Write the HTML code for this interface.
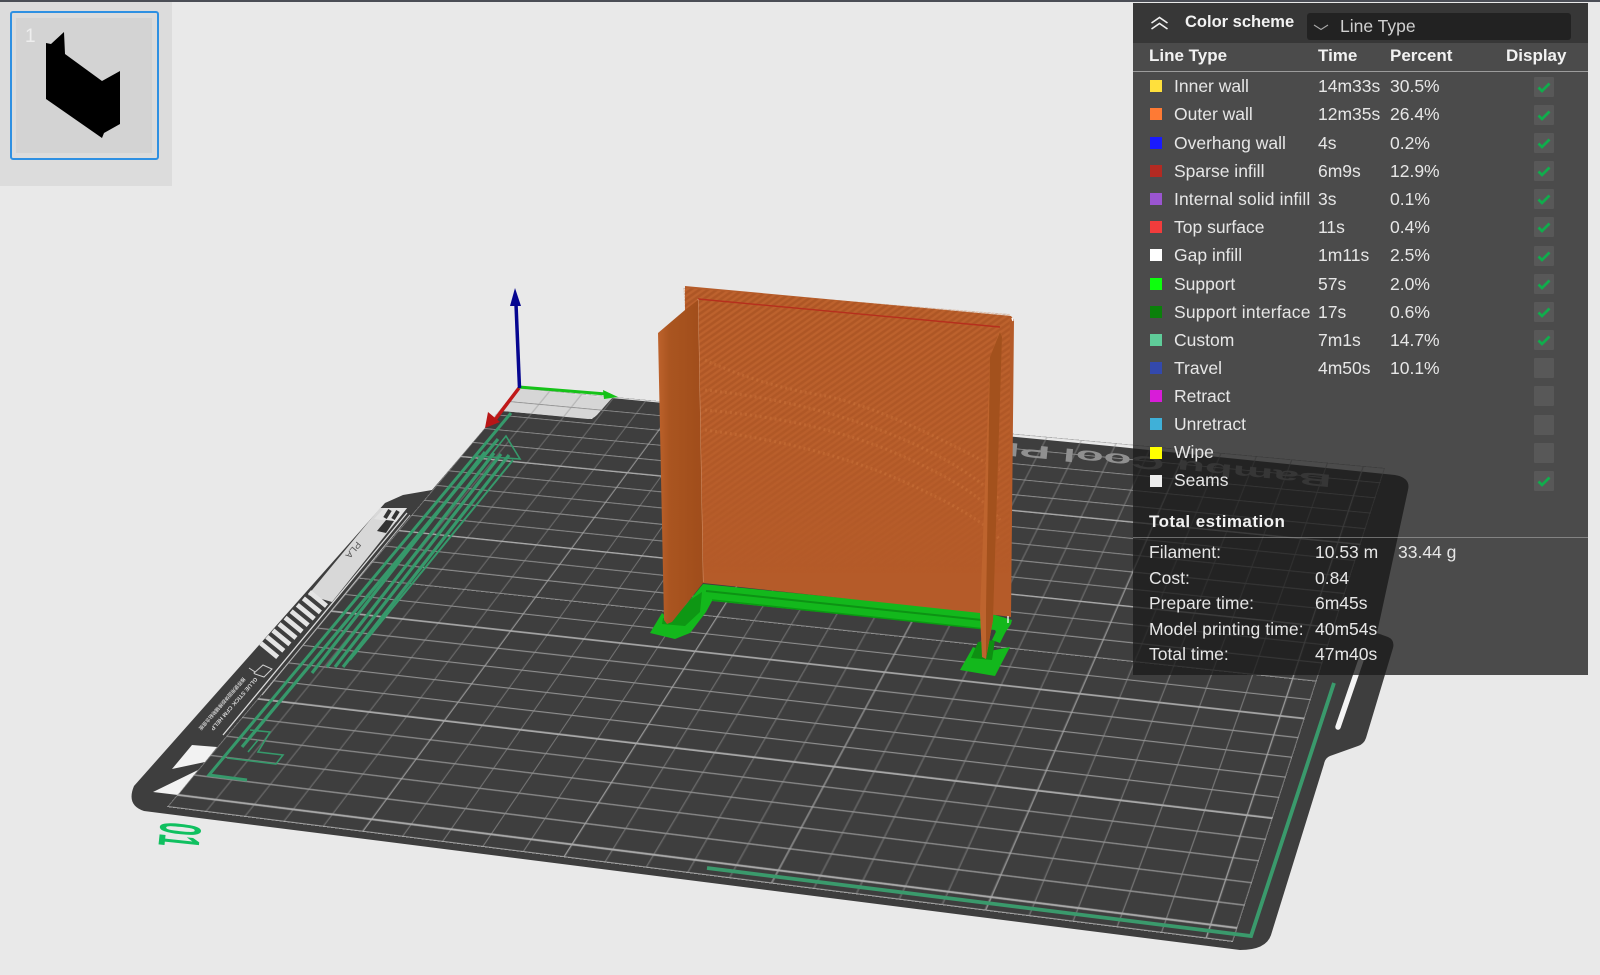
<!DOCTYPE html>
<html><head><meta charset="utf-8"><title>Line Type preview</title>
<style>
html,body{margin:0;padding:0;background:#e9e9e9;width:1600px;height:975px;overflow:hidden}
body{position:relative;font-family:"Liberation Sans","Noto Sans CJK SC",sans-serif;color:#e6e6e6}
.abs{position:absolute}
#grid{position:absolute;left:0;top:0;width:1000px;height:1000px;transform-origin:0 0;transform:matrix3d(.78333,.05173,0,-.00006041,-.38361,.2614,0,-.00019529,0,0,1,0,518,388,0,1)}
#panel{position:absolute;left:1133px;top:3px;width:455px;height:672px;background:rgba(27,27,27,.77)}
#head{position:absolute;left:1133px;top:3px;width:455px;height:40px;background:rgba(0,0,0,.27)}
.t{position:absolute;white-space:nowrap;line-height:24px;font-size:17.5px;height:24px}
.b{font-weight:bold;font-size:17px;color:#f2f2f2}
.sw{position:absolute;left:1150px;width:12px;height:12px}
.cb{position:absolute;left:1534px;width:20px;height:20px;background:#585858;border-radius:1px}
.cb svg{position:absolute;left:0;top:0}
.ln{position:absolute;left:1133px;width:455px;height:1px}
</style></head><body>

<svg class="abs" style="left:0;top:0" width="1600" height="975" viewBox="0 0 1600 975">
  <path d="M134 786 L385 503 L403 495 L432 490 L485 428 L502 411 L592 419 L612 398 L1120 447 L1395 475 Q1411 478 1408 490 L1377 633 L1388 637 Q1395 640 1393 648 L1366 738 Q1364 744 1358 746 L1330 756 Q1325 758 1324 764 L1271 935 Q1266 950 1240 950 L144 811 Q126 805 134 786 Z" fill="#3e3e3e"/>
  <path d="M519 389 L612 398 L597 415 Q593 419 588 419 L502 411 Z" fill="#d6d6d6"/>
  <!-- white tabs -->
  <polygon points="192,745 217,747 205,762 172,769" fill="#f2f2f2"/>
  <polygon points="198,770 178,795 153,792" fill="#f2f2f2"/>
  <!-- label strip -->
  <polygon points="407,508 332,602 308,595 380,508" fill="#d8d8d8"/>
  <polygon points="407,508 396,522 374,519 384,508" fill="#e2e2e2"/>
  <path d="M390 510l-5 8M398 511l-5 8" stroke="#333" stroke-width="4"/>
  <polygon points="386,520 394,521 386,533 377,531" fill="#333"/>
  <path d="M309.500 592L326.500 606M303.400 598.400L320.400 612.400M297.300 604.800L314.300 618.800M291.200 611.200L308.200 625.200M285.100 617.600L302.100 631.600M279 624L296 638M272.900 630.400L289.900 644.400M266.800 636.800L283.800 650.800M260.700 643.200L277.700 657.200" stroke="#e4e4e4" stroke-width="4.8"/>
  <line x1="407" y1="513" x2="223" y2="735" stroke="#dcdcdc" stroke-width="1.3"/>
  <line x1="410" y1="515" x2="262" y2="695" stroke="#bdbdbd" stroke-width="1"/>
  <path d="M254 673l9-8 9 4-8 8-9-3zm1-1l-6-4" fill="none" stroke="#d0d0d0" stroke-width="1"/>
  <text transform="translate(357,541) rotate(-50) scale(.9,.8) rotate(180)" font-size="11" fill="#555" font-family="Liberation Sans,sans-serif">PLA</text>
  <text transform="translate(255,677) rotate(131) scale(1,.7)" font-size="8" font-weight="bold" fill="#d4d4d4" textLength="68" lengthAdjust="spacingAndGlyphs" font-family="Liberation Sans,sans-serif">GLUE STICK CFM HELP</text>
  <text transform="translate(243,677) rotate(131) scale(1,.7)" font-size="7" font-weight="bold" fill="#c4c4c4" textLength="68" lengthAdjust="spacingAndGlyphs" font-family="Liberation Sans,Noto Sans CJK SC,sans-serif">推荐使用固体胶棒辅助粘合底板</text>
  <!-- plate brand -->
  <text transform="translate(1332,475) rotate(185.7)" font-size="18" font-weight="bold" fill="#909090" textLength="392" lengthAdjust="spacingAndGlyphs" font-family="Liberation Sans,sans-serif">Bambu Cool Plate</text>
  <!-- slot -->
  <path d="M1361 660 L1338 727" stroke="#f4f4f4" stroke-width="5.5" stroke-linecap="round"/>
  <!-- 01 -->
  <text transform="translate(161,821) rotate(96) scale(.72,1.95)" font-size="30" font-weight="bold" fill="#10c060" font-family="Liberation Sans,sans-serif">01</text>
</svg>

<svg id="grid" width="1000" height="1000" viewBox="0 0 1000 1000">
  <g fill="none" stroke="#8e8e8e">
    <path stroke-width=".8" d="M39.06 0V1000M78.13 0V1000M117.19 0V1000M156.25 0V1000M234.38 0V1000M273.44 0V1000M312.5 0V1000M351.56 0V1000M429.69 0V1000M468.75 0V1000M507.81 0V1000M546.88 0V1000M625 0V1000M664.06 0V1000M703.13 0V1000M742.19 0V1000M820.31 0V1000M859.38 0V1000M898.44 0V1000M937.5 0V1000"/>
    <path stroke-width="2.3" d="M0 39.06H1000M0 78.13H1000M0 117.19H1000M0 156.25H1000M0 234.38H1000M0 273.44H1000M0 312.5H1000M0 351.56H1000M0 429.69H1000M0 468.75H1000M0 507.81H1000M0 546.88H1000M0 625H1000M0 664.06H1000M0 703.13H1000M0 742.19H1000M0 820.31H1000M0 859.38H1000M0 898.44H1000M0 937.5H1000"/>
    <path stroke="#a8a8a8" stroke-width="1.2" d="M195.31 0V1000M390.63 0V1000M585.94 0V1000M781.25 0V1000M976.56 0V1000M1000 0V1000M0 0V1000"/>
    <path stroke="#a8a8a8" stroke-width="3.4" d="M0 195.31H1000M0 390.63H1000M0 585.94H1000M0 781.25H1000M0 976.56H1000M0 1000H1000M0 0H1000"/>
  </g>
</svg>

<svg class="abs" style="left:0;top:0" width="1600" height="975" viewBox="0 0 1600 975">
  <defs>
    <pattern id="tx" width="6" height="5" patternUnits="userSpaceOnUse" patternTransform="rotate(-35)">
      <rect width="6" height="2" fill="#cf7439"/>
      <rect y="2.5" width="6" height="2" fill="#9d4d1d"/>
    </pattern>
    <linearGradient id="fade" x1="0" y1="0" x2="0" y2="1">
      <stop offset="0" stop-color="#fff" stop-opacity=".32"/>
      <stop offset=".45" stop-color="#fff" stop-opacity=".2"/>
      <stop offset="1" stop-color="#fff" stop-opacity="0"/>
    </linearGradient>
    <mask id="m"><rect x="680" y="285" width="340" height="290" fill="url(#fade)"/></mask>
    <linearGradient id="lw" x1="0" y1="0" x2="1" y2="0">
      <stop offset="0" stop-color="#bd622c"/><stop offset=".25" stop-color="#aa5520"/><stop offset="1" stop-color="#a04d1b"/>
    </linearGradient>
  </defs>
  <!-- green toolpaths -->
  <g fill="none" stroke="#36996b" stroke-width="3.2">
    <path d="M511 413 L209 775 L247 780" stroke-width="3"/>
    <path d="M498 439 L242 747"/>
    <path d="M485 452 L312 673"/>
    <path d="M494 453 L327 667"/>
    <path d="M501 454 L335 667"/>
    <path d="M509 455 L343 667"/>
    <path d="M513 460 L350 660" stroke-width="2"/>
    <g stroke-width="1.6">
      <path d="M476 456 L520 459 L506 436 L490 456"/>
      <path d="M250 730 L270 732 L258 752 L283 755 L276 764 L227 758"/>
      <path d="M258 740 L248 752"/>
    </g>
  </g>
  <path d="M707 868 L1251 936 L1334 683" fill="none" stroke="#3a9a6c" stroke-width="3.8"/>
  <!-- axes -->
  <g>
    <path d="M519 388 L494 421" stroke="#c01818" stroke-width="3.5"/>
    <polygon points="485,428 488,412 500,422" fill="#b81616"/>
    <path d="M519 387 L606 394" stroke="#15c218" stroke-width="3"/>
    <polygon points="618,397 603,390 604,399" fill="#15c218"/>
    <path d="M519.5 388 L516 304" stroke="#060690" stroke-width="3.5"/>
    <polygon points="515,288 510,306 521,306" fill="#060690"/>
  </g>
  <!-- supports -->
  <polygon points="650,633 662,613 672,622 703,584 985,612 1012,620 1011,624 1000,640 995,630 712,601 706,612 690,633 675,639" fill="#13b81c"/>
  <path d="M706 591 L982 620" stroke="#0d9214" stroke-width="2"/>
  <path d="M712 600 L985 629" stroke="#0a9a12" stroke-width="1.5"/>
  <polygon points="663,618 671,622 690,600 702,592 700,612 685,626 662,624" fill="#0e9714"/>
  <polygon points="960,670 973,647 985,652 1010,647 995,676" fill="#13b81c"/>
  <polygon points="971,658 978,642 995,640 992,660" fill="#0e8f12"/>
  <polygon points="992,640 1003,617 1010,623 1000,643" fill="#13b81c"/>
  <!-- walls -->
  <polygon points="685,286 1011,316 1014,320 1011,617 980,613 703,583 685,310" fill="#b55b29"/>
  <rect x="680" y="285" width="340" height="290" fill="url(#tx)" mask="url(#m)" clip-path="polygon(1% 1%,97% 10%,97% 100%,7% 100%)"/>
  <g fill="none" stroke="#c97139" stroke-width="3" stroke-dasharray="2 3" opacity=".55">
    <path d="M705 360 Q760 385 820 395 T1000 470"/>
    <path d="M705 390 Q800 400 880 430 T1000 500"/>
    <path d="M705 410 Q820 420 900 455 T1000 520"/>
    <path d="M705 430 Q820 445 900 480 T1000 540"/>
  </g>
  <path d="M698 299 L1000 327" stroke="#b62f1d" stroke-width="1.4"/>
  <path d="M698 299 L703 582" stroke="#d8a17d" stroke-width=".8"/>
  <path d="M1012 318l1 3" stroke="#fff" stroke-width="1.4"/>
  <path d="M1008 616v7" stroke="#fff" stroke-width="1.3"/>
  <polygon points="658,333 685,310 698,300 703,583 672,622 667,624 664,620" fill="url(#lw)"/>
  <polygon points="1000,330 990,357 980,613 982,657 986,659 993,620 1002,337" fill="#be642e"/>
  <polygon points="1000,332 990,357 986,610 986,658 993,620 1002,337" fill="#a3511d"/>
</svg>

<!-- thumbnail -->
<div class="abs" style="left:0;top:0;width:172px;height:186px;background:#dcdcdc"></div>
<div class="abs" style="left:10px;top:11px;width:145px;height:145px;border:2px solid #2e90e2;border-radius:3px"></div>
<div class="abs" style="left:16px;top:18px;width:136px;height:135px;background:#d3d3d3"></div>
<div class="abs" style="left:25px;top:26px;color:#eee;font-size:19px;line-height:22px">1</div>
<svg class="abs" style="left:0;top:0" width="172" height="186"><polygon points="46,43 51,44 64,32 65,54 102,81 120,71 120,124 104,133 102,138 46,99" fill="#000"/></svg>
<div class="abs" style="left:0;top:0;width:1600px;height:2px;background:#4b4e56"></div>

<!-- panel -->
<div id="panel"></div><div id="head"></div>
<svg class="abs" style="left:1150px;top:15px" width="20" height="16"><path d="M1.5 8 L9.5 2.5 L17.5 8M1.5 14 L9.5 8.5 L17.5 14" fill="none" stroke="#efefef" stroke-width="1.6"/></svg>
<div class="t b" style="left:1185px;top:10px;font-size:16.5px">Color scheme</div>
<div class="abs" style="left:1307px;top:13px;width:264px;height:27px;background:#222;border-radius:3px"></div>
<svg class="abs" style="left:1312px;top:22px" width="18" height="10"><path d="M2 3 L9 7.5 L16 3" fill="none" stroke="#aaa" stroke-width="1.1"/></svg>
<div class="t" style="left:1340px;top:14px;color:#d0d0d0">Line Type</div>

<div class="t b" style="left:1149px;top:44px">Line Type</div>
<div class="t b" style="left:1318px;top:44px">Time</div>
<div class="t b" style="left:1390px;top:44px">Percent</div>
<div class="t b" style="left:1506px;top:44px">Display</div>
<div class="ln" style="top:71px;background:#9c9c9c"></div>

<div class="sw" style="top:80px;background:#ffe03c"></div><div class="t" style="left:1174px;top:74px">Inner wall</div><div class="t" style="left:1318px;top:74px">14m33s</div><div class="t" style="left:1390px;top:74px">30.5%</div>
<div class="sw" style="top:108px;background:#fe7a34"></div><div class="t" style="left:1174px;top:102px">Outer wall</div><div class="t" style="left:1318px;top:102px">12m35s</div><div class="t" style="left:1390px;top:102px">26.4%</div>
<div class="sw" style="top:137px;background:#1a1aff"></div><div class="t" style="left:1174px;top:131px">Overhang wall</div><div class="t" style="left:1318px;top:131px">4s</div><div class="t" style="left:1390px;top:131px">0.2%</div>
<div class="sw" style="top:165px;background:#b32a22"></div><div class="t" style="left:1174px;top:159px">Sparse infill</div><div class="t" style="left:1318px;top:159px">6m9s</div><div class="t" style="left:1390px;top:159px">12.9%</div>
<div class="sw" style="top:193px;background:#9a55d0"></div><div class="t" style="left:1174px;top:187px;letter-spacing:.1px">Internal solid infill</div><div class="t" style="left:1318px;top:187px">3s</div><div class="t" style="left:1390px;top:187px">0.1%</div>
<div class="sw" style="top:221px;background:#f23c3c"></div><div class="t" style="left:1174px;top:215px">Top surface</div><div class="t" style="left:1318px;top:215px">11s</div><div class="t" style="left:1390px;top:215px">0.4%</div>
<div class="sw" style="top:249px;background:#fff"></div><div class="t" style="left:1174px;top:243px">Gap infill</div><div class="t" style="left:1318px;top:243px">1m11s</div><div class="t" style="left:1390px;top:243px">2.5%</div>
<div class="sw" style="top:278px;background:#0dff0d"></div><div class="t" style="left:1174px;top:272px">Support</div><div class="t" style="left:1318px;top:272px">57s</div><div class="t" style="left:1390px;top:272px">2.0%</div>
<div class="sw" style="top:306px;background:#0a800a"></div><div class="t" style="left:1174px;top:300px;letter-spacing:.2px">Support interface</div><div class="t" style="left:1318px;top:300px">17s</div><div class="t" style="left:1390px;top:300px">0.6%</div>
<div class="sw" style="top:334px;background:#5fcc99"></div><div class="t" style="left:1174px;top:328px">Custom</div><div class="t" style="left:1318px;top:328px">7m1s</div><div class="t" style="left:1390px;top:328px">14.7%</div>
<div class="sw" style="top:362px;background:#3349ad"></div><div class="t" style="left:1174px;top:356px">Travel</div><div class="t" style="left:1318px;top:356px">4m50s</div><div class="t" style="left:1390px;top:356px">10.1%</div>
<div class="sw" style="top:390px;background:#d81cd8"></div><div class="t" style="left:1174px;top:384px">Retract</div>
<div class="sw" style="top:418px;background:#3fb0d8"></div><div class="t" style="left:1174px;top:412px">Unretract</div>
<div class="sw" style="top:447px;background:#ffff00"></div><div class="t" style="left:1174px;top:440px">Wipe</div>
<div class="sw" style="top:475px;background:#eee"></div><div class="t" style="left:1174px;top:468px">Seams</div>

<div class="cb" style="top:77px"><svg width="20" height="20"><path d="M4.5 10.5 L8 14 L15.5 6.5" fill="none" stroke="#10ad4c" stroke-width="2.7"/></svg></div>
<div class="cb" style="top:105px"><svg width="20" height="20"><path d="M4.5 10.5 L8 14 L15.5 6.5" fill="none" stroke="#10ad4c" stroke-width="2.7"/></svg></div>
<div class="cb" style="top:133px"><svg width="20" height="20"><path d="M4.5 10.5 L8 14 L15.5 6.5" fill="none" stroke="#10ad4c" stroke-width="2.7"/></svg></div>
<div class="cb" style="top:161px"><svg width="20" height="20"><path d="M4.5 10.5 L8 14 L15.5 6.5" fill="none" stroke="#10ad4c" stroke-width="2.7"/></svg></div>
<div class="cb" style="top:189px"><svg width="20" height="20"><path d="M4.5 10.5 L8 14 L15.5 6.5" fill="none" stroke="#10ad4c" stroke-width="2.7"/></svg></div>
<div class="cb" style="top:217px"><svg width="20" height="20"><path d="M4.5 10.5 L8 14 L15.5 6.5" fill="none" stroke="#10ad4c" stroke-width="2.7"/></svg></div>
<div class="cb" style="top:246px"><svg width="20" height="20"><path d="M4.5 10.5 L8 14 L15.5 6.5" fill="none" stroke="#10ad4c" stroke-width="2.7"/></svg></div>
<div class="cb" style="top:274px"><svg width="20" height="20"><path d="M4.5 10.5 L8 14 L15.5 6.5" fill="none" stroke="#10ad4c" stroke-width="2.7"/></svg></div>
<div class="cb" style="top:302px"><svg width="20" height="20"><path d="M4.5 10.5 L8 14 L15.5 6.5" fill="none" stroke="#10ad4c" stroke-width="2.7"/></svg></div>
<div class="cb" style="top:330px"><svg width="20" height="20"><path d="M4.5 10.5 L8 14 L15.5 6.5" fill="none" stroke="#10ad4c" stroke-width="2.7"/></svg></div>
<div class="cb" style="top:358px"></div>
<div class="cb" style="top:386px"></div>
<div class="cb" style="top:415px"></div>
<div class="cb" style="top:443px"></div>
<div class="cb" style="top:471px"><svg width="20" height="20"><path d="M4.5 10.5 L8 14 L15.5 6.5" fill="none" stroke="#10ad4c" stroke-width="2.7"/></svg></div>

<div class="t b" style="left:1149px;top:510px;letter-spacing:.45px">Total estimation</div>
<div class="ln" style="top:537px;background:rgba(200,200,200,.45)"></div>
<div class="t" style="left:1149px;top:540px">Filament:</div><div class="t" style="left:1315px;top:540px">10.53 m</div><div class="t" style="left:1398px;top:540px">33.44 g</div>
<div class="t" style="left:1149px;top:566px">Cost:</div><div class="t" style="left:1315px;top:566px">0.84</div>
<div class="t" style="left:1149px;top:591px">Prepare time:</div><div class="t" style="left:1315px;top:591px">6m45s</div>
<div class="t" style="left:1149px;top:617px;letter-spacing:.1px">Model printing time:</div><div class="t" style="left:1315px;top:617px">40m54s</div>
<div class="t" style="left:1149px;top:642px">Total time:</div><div class="t" style="left:1315px;top:642px">47m40s</div>
</body></html>
